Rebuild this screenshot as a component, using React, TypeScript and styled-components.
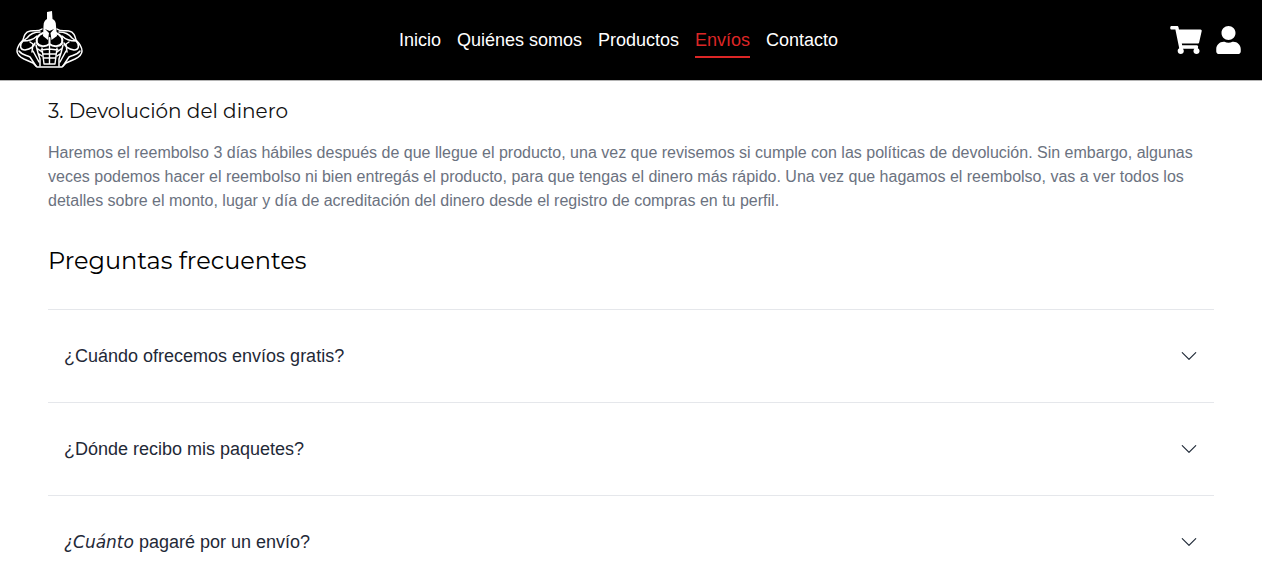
import React from "react";
import styled, { createGlobalStyle } from "styled-components";
import { FaShoppingCart, FaUser } from "react-icons/fa";
import { BsChevronDown } from "react-icons/bs";

const GlobalStyle = createGlobalStyle`
  *, *::before, *::after { box-sizing: border-box; }
  body {
    margin: 0;
    background: #fff;
    color: #1f2937;
    font-family: "Liberation Sans", Arial, sans-serif;
    font-size: 16px;
    line-height: 24px;
  }
`;

const Header = styled.header`
  display: flex;
  align-items: center;
  justify-content: space-between;
  padding: 11px 21px 11px 16px;
  border-bottom: 1px solid #b4b4b4;
  background: #000;
`;

const LogoLink = styled.a`
  display: flex;
`;

const Nav = styled.nav`
  display: flex;
  gap: 16px;
  font-size: 18px;
  line-height: 28px;
`;

const NavLink = styled.a<{ $active?: boolean }>`
  padding: 4px 0 2px;
  border-bottom: 2px solid ${(p) => (p.$active ? "#dc2626" : "transparent")};
  color: ${(p) => (p.$active ? "#dc2626" : "#fff")};
  text-decoration: none;
`;

const Actions = styled.div`
  display: flex;
  gap: 14px;
  padding-left: 16px;
`;

const IconLink = styled.a<{ $width: number }>`
  display: flex;
  color: #fff;

  svg {
    width: ${(p) => p.$width}px;
    height: 28px;
  }
`;

const Main = styled.main`
  padding: 16px 48px;
`;

const Subtitle = styled.h3`
  margin: 0;
  color: #111;
  font: 400 20px/28px Montserrat, Inter, sans-serif;
`;

const Paragraph = styled.p`
  margin: 16px 0 32px;
  color: #6b7280;
`;

const Title = styled.h2`
  margin: 0 0 32px;
  color: #000;
  font: 400 24px/32px Montserrat, Inter, sans-serif;
`;

const Question = styled.button`
  display: flex;
  align-items: center;
  justify-content: space-between;
  width: 100%;
  padding: 32px 16px;
  border: 0;
  border-top: 1px solid #e5e7eb;
  background: none;
  color: #1f2937;
  font: 18px/28px "Liberation Sans", Arial, sans-serif;
  text-align: left;
  cursor: pointer;
`;

const Accent = styled.em`
  font-family: "DejaVu Sans", Verdana, sans-serif;
  font-size: 17px;
  line-height: 20px;
`;

const Logo = () => (
  <svg width="67" height="58" viewBox="0 0 67 58" fill="none" stroke="#fff" strokeWidth="1.5" strokeLinejoin="round" strokeLinecap="round" aria-hidden="true">
    {/* outline of the shoulders, arms and waist */}
    <path d="M26 18C22 21 18 19 14 20C9 21 8 25 7 29C4 32 1 36 1 40C1 44 4 46 8 48L17 52L21 56H46L50 52L59 48C63 46 66 44 66 40C66 36 63 32 60 29C59 25 58 21 53 20C49 19 45 21 41 18" />
    {/* forearms */}
    <path d="M3 40C6 44 10 44 14 46L20 55M64 40C61 44 57 44 53 46L47 55M17 40L23 51M50 40L44 51" />
    {/* deltoids and biceps */}
    <path d="M24 21C18 21 14 23 11 27L7 30C13 30 17 29 21 25M43 21C49 21 53 23 56 27L60 30C54 30 50 29 46 25M7 30C3 34 4 39 9 39C14 38 18 36 19 32M60 30C64 34 63 39 58 39C53 38 49 36 48 32M14 31L17 33L16 41M53 31L50 33L51 41" />
    {/* chest */}
    <path d="M27 22C22 24 20 28 21 32C23 36 30 36 33.500 33V27M40 22C45 24 47 28 46 32C44 36 37 36 33.500 33" strokeWidth="2" />
    {/* flanks */}
    <path d="M20 34L22 42L24 48V55M47 34L45 42L43 48V55M22 38L26 41M45 38L41 41M23 43L26 45M44 43L41 45" />
    {/* abdomen */}
    <path d="M33.500 34V53M26 37L28 53H39L41 37M25 39L33 38L42 39M27 43H40M27 47H40" strokeWidth="1.400" />
    {/* helmet */}
    <path d="M31 1L36 0L36.500 8C39 9 40 11 40 15L41 25L35.500 29L34.500 22L38 18L33.500 20L29 18L33 22L32 29L27 25L27.500 15C27.500 11 29 9 31 8Z" fill="#fff" stroke="none" />
  </svg>
);

const links = ["Inicio", "Quiénes somos", "Productos", "Envíos", "Contacto"];

const questions = [
  { text: "¿Cuándo ofrecemos envíos gratis?" },
  { text: "¿Dónde recibo mis paquetes?" },
  { accent: "¿Cuánto", text: " pagaré por un envío?" },
];

export default function App() {
  return (
    <>
      <GlobalStyle />
      <Header>
        <LogoLink href="#" aria-label="Inicio"><Logo /></LogoLink>
        <Nav>
          {links.map((l) => (
            <NavLink key={l} href="#" $active={l === "Envíos"}>{l}</NavLink>
          ))}
        </Nav>
        <Actions>
          <IconLink href="#" aria-label="Carrito" $width={32}><FaShoppingCart /></IconLink>
          <IconLink href="#" aria-label="Perfil" $width={25}><FaUser /></IconLink>
        </Actions>
      </Header>
      <Main>
        <Subtitle>3. Devolución del dinero</Subtitle>
        <Paragraph>
          Haremos el reembolso 3 días hábiles después de que llegue el producto, una vez que revisemos si cumple con las políticas de devolución. Sin embargo, algunas veces podemos hacer el reembolso ni bien entregás el producto, para que tengas el dinero más rápido. Una vez que hagamos el reembolso, vas a ver todos los detalles sobre el monto, lugar y día de acreditación del dinero desde el registro de compras en tu perfil.
        </Paragraph>
        <Title>Preguntas frecuentes</Title>
        {questions.map((q) => (
          <Question key={q.text} type="button" aria-expanded={false}>
            <span>{q.accent && <Accent>{q.accent}</Accent>}{q.text}</span>
            <BsChevronDown size={18} aria-hidden="true" />
          </Question>
        ))}
      </Main>
    </>
  );
}
